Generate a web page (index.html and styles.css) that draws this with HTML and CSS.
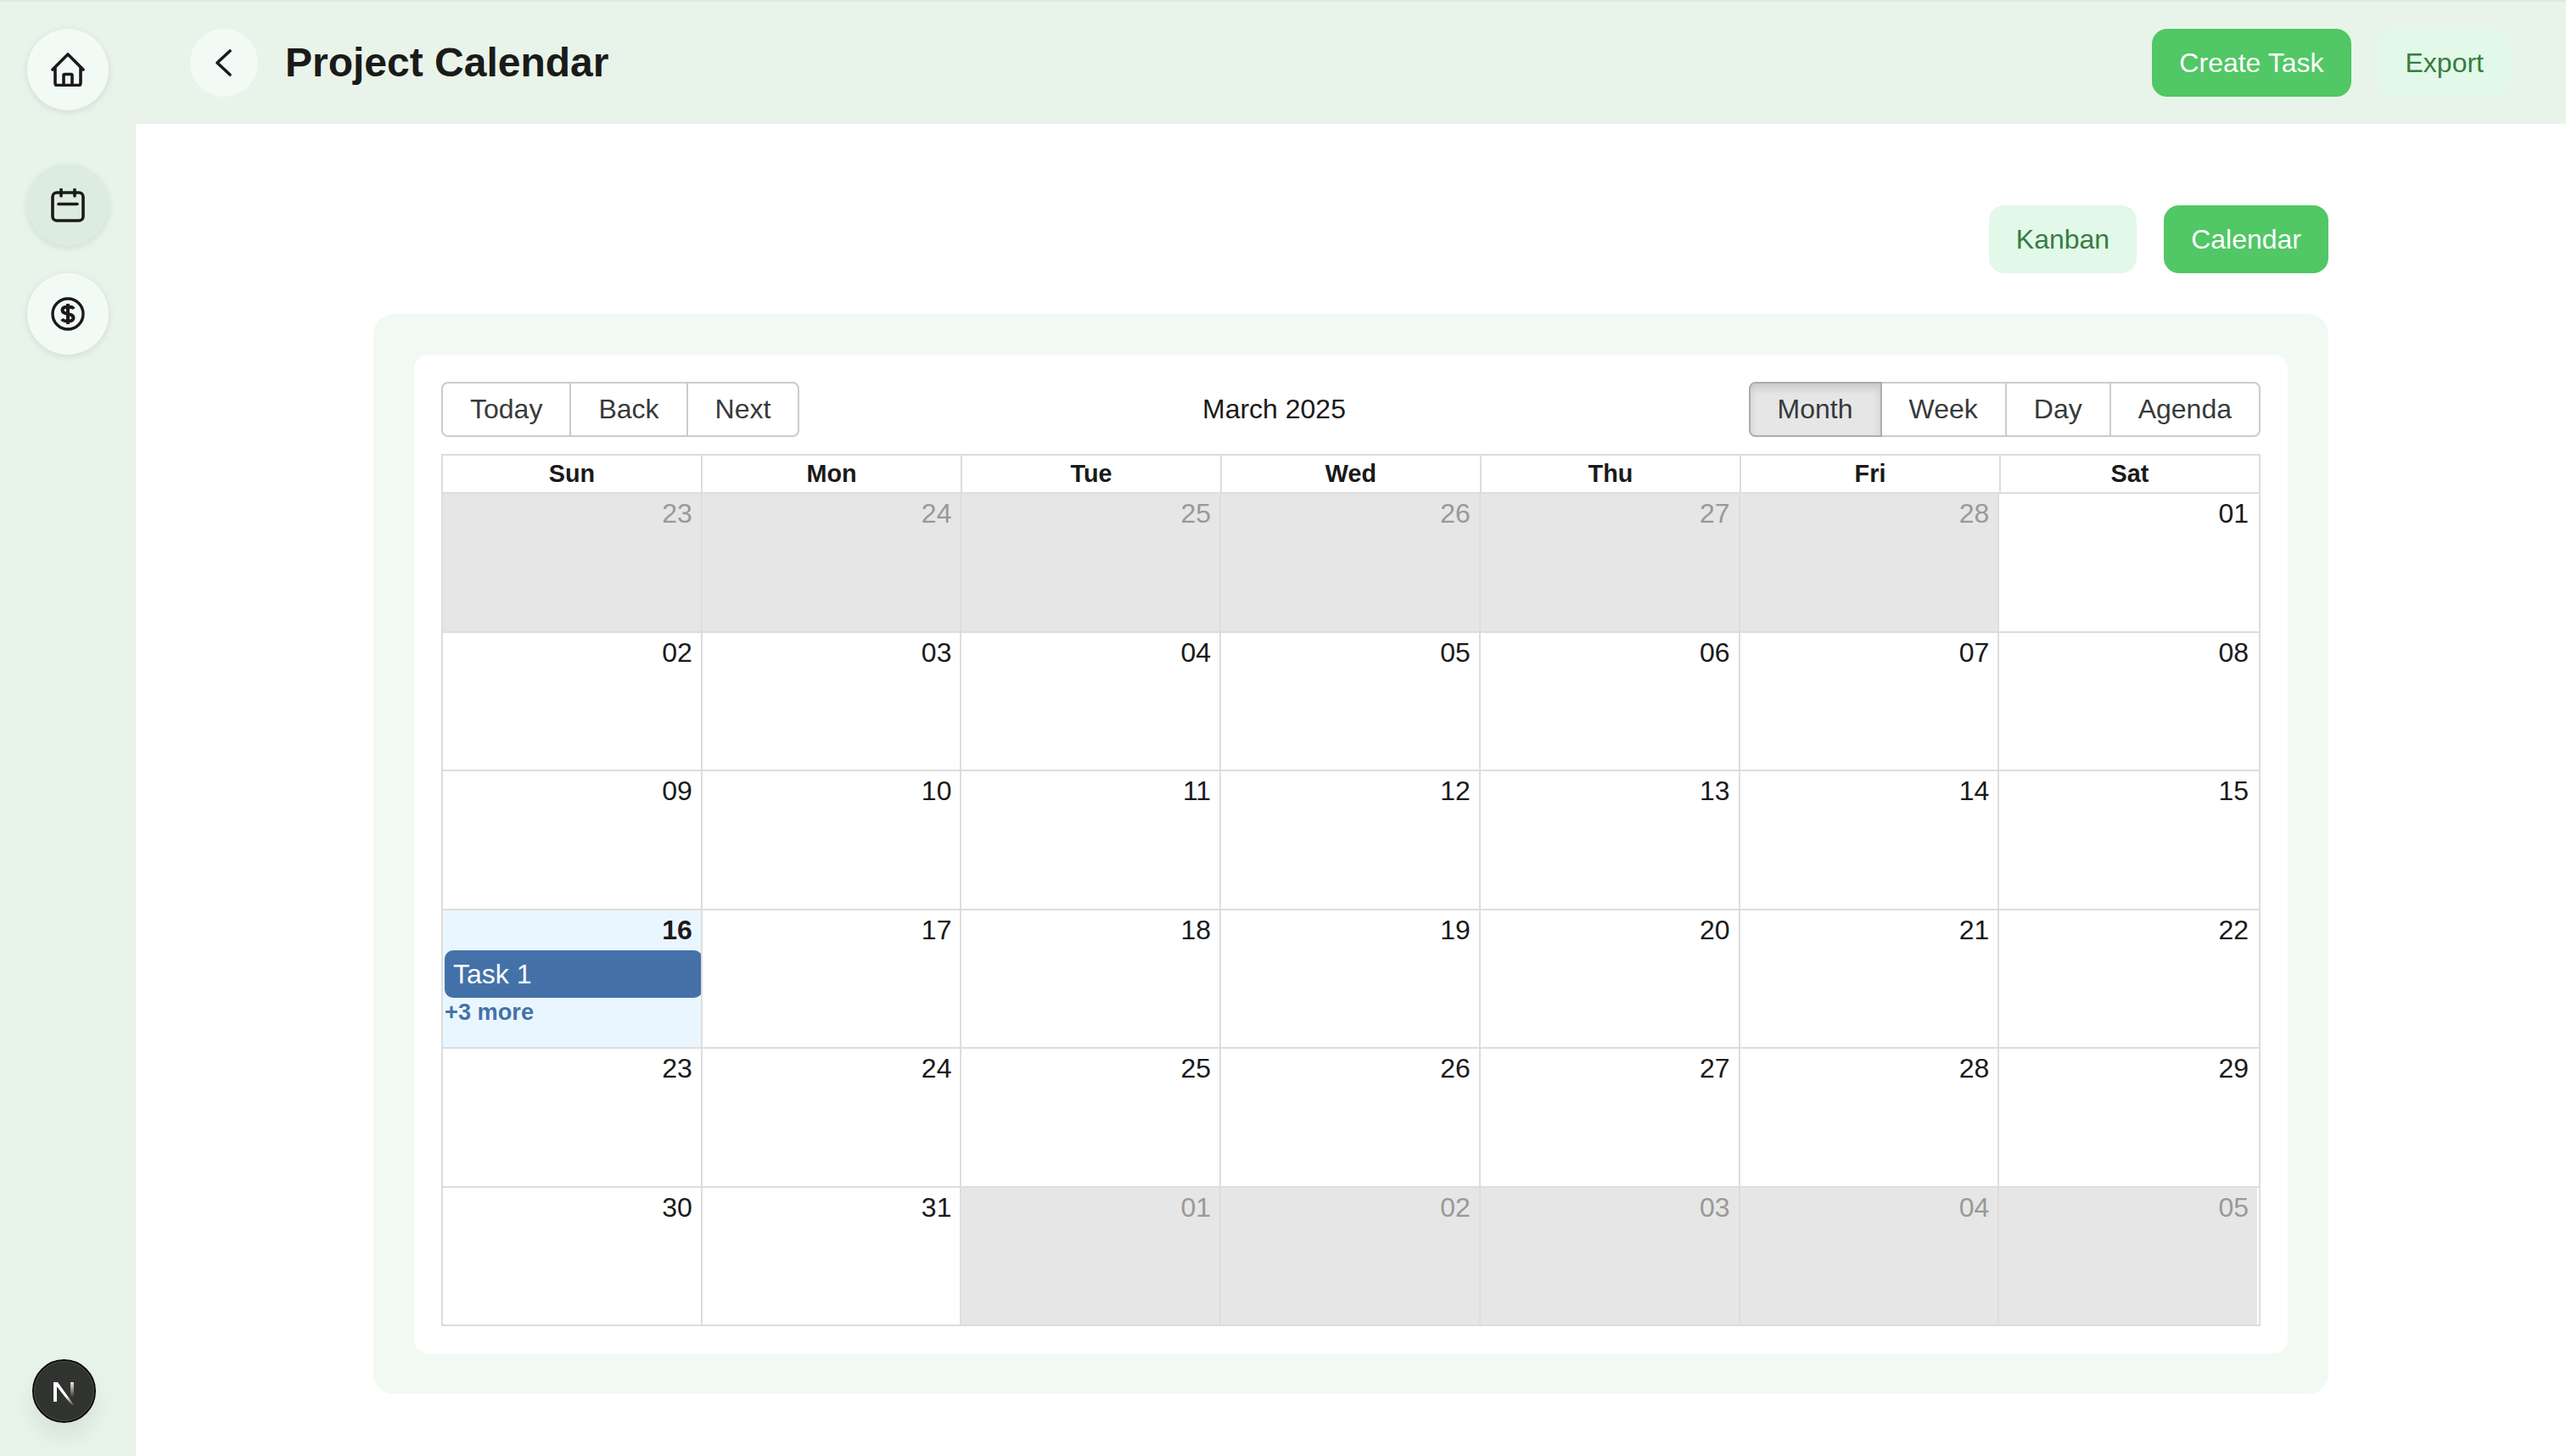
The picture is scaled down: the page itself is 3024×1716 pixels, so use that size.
FILE: index.html
```html
<!DOCTYPE html>
<html lang="en">
<head>
<meta charset="utf-8">
<title>Project Calendar</title>
<link rel="stylesheet" href="styles.css">
</head>
<body>
<div class="app">
  <aside class="sidebar">
    <a class="nav-circle nav-home">
      <svg class="icon" viewBox="0 0 40 40" width="40" height="40"><path d="M2 20 L20 2 L38 20 M5 18 V36 Q5 38.5 7.5 38.5 H32.5 Q35 38.5 35 36 V18 M15 38 V27 Q15 25.5 16.5 25.5 H23.5 Q25 25.5 25 27 V38" fill="none" stroke="#1a1a1a" stroke-width="3.6" stroke-linejoin="round" stroke-linecap="round"/></svg>
    </a>
    <a class="nav-circle nav-active">
      <svg class="icon" viewBox="0 0 40 40" width="40" height="40"><rect x="2" y="5" width="36" height="33" rx="5" fill="none" stroke="#1a1a1a" stroke-width="3.6"/><path d="M12 1.5 V9 M28 1.5 V9 M9 18.5 H31" fill="none" stroke="#1a1a1a" stroke-width="3.6" stroke-linecap="round"/></svg>
    </a>
    <a class="nav-circle">
      <svg class="icon" viewBox="0 0 40 40" width="40" height="40"><circle cx="20" cy="20" r="18" fill="none" stroke="#1a1a1a" stroke-width="3.4"/><path d="M27 14 Q25.5 11.5 20 11.5 Q13.5 11.5 13.5 15.5 Q13.5 19 20 20 Q26.5 21 26.5 24.5 Q26.5 28.5 20 28.5 Q14.5 28.5 13 26 M20 8 V32" fill="none" stroke="#1a1a1a" stroke-width="4"/></svg>
    </a>
  </aside>

  <main class="main">
    <header class="topbar">
      <div class="topbar-left">
        <a class="back-circle">
          <svg viewBox="0 0 20 32" width="20" height="32"><path d="M18 2 L3 16 L18 30" fill="none" stroke="#1a1a1a" stroke-width="3.6" stroke-linecap="round" stroke-linejoin="round"/></svg>
        </a>
        <h1 class="title">Project Calendar</h1>
      </div>
      <div class="btn-row">
        <button class="pill pill-solid">Create Task</button>
        <button class="pill pill-soft">Export</button>
      </div>
    </header>

    <section class="content">
      <div class="btn-row tabs">
        <button class="pill pill-soft">Kanban</button>
        <button class="pill pill-solid">Calendar</button>
      </div>
      <div class="panel">
        <div class="card">
          <div class="toolbar">
            <div class="group">
              <button class="tb">Today</button><button class="tb">Back</button><button class="tb">Next</button>
            </div>
            <div class="label">March 2025</div>
            <div class="group">
              <button class="tb tb-active">Month</button><button class="tb">Week</button><button class="tb">Day</button><button class="tb">Agenda</button>
            </div>
          </div>
          <div class="month">
            <div class="head">
              <div class="hcell">Sun</div><div class="hcell">Mon</div><div class="hcell">Tue</div><div class="hcell">Wed</div><div class="hcell">Thu</div><div class="hcell">Fri</div><div class="hcell">Sat</div>
            </div>
            <div class="week">
              <div class="day off"><div class="date">23</div></div>
              <div class="day off"><div class="date">24</div></div>
              <div class="day off"><div class="date">25</div></div>
              <div class="day off"><div class="date">26</div></div>
              <div class="day off"><div class="date">27</div></div>
              <div class="day off"><div class="date">28</div></div>
              <div class="day"><div class="date">01</div></div>
            </div>
            <div class="week">
              <div class="day"><div class="date">02</div></div>
              <div class="day"><div class="date">03</div></div>
              <div class="day"><div class="date">04</div></div>
              <div class="day"><div class="date">05</div></div>
              <div class="day"><div class="date">06</div></div>
              <div class="day"><div class="date">07</div></div>
              <div class="day"><div class="date">08</div></div>
            </div>
            <div class="week">
              <div class="day"><div class="date">09</div></div>
              <div class="day"><div class="date">10</div></div>
              <div class="day"><div class="date">11</div></div>
              <div class="day"><div class="date">12</div></div>
              <div class="day"><div class="date">13</div></div>
              <div class="day"><div class="date">14</div></div>
              <div class="day"><div class="date">15</div></div>
            </div>
            <div class="week">
              <div class="day today">
                <div class="date">16</div>
                <div class="event">Task 1</div>
                <div class="more">+3 more</div>
              </div>
              <div class="day"><div class="date">17</div></div>
              <div class="day"><div class="date">18</div></div>
              <div class="day"><div class="date">19</div></div>
              <div class="day"><div class="date">20</div></div>
              <div class="day"><div class="date">21</div></div>
              <div class="day"><div class="date">22</div></div>
            </div>
            <div class="week">
              <div class="day"><div class="date">23</div></div>
              <div class="day"><div class="date">24</div></div>
              <div class="day"><div class="date">25</div></div>
              <div class="day"><div class="date">26</div></div>
              <div class="day"><div class="date">27</div></div>
              <div class="day"><div class="date">28</div></div>
              <div class="day"><div class="date">29</div></div>
            </div>
            <div class="week">
              <div class="day"><div class="date">30</div></div>
              <div class="day"><div class="date">31</div></div>
              <div class="day off"><div class="date">01</div></div>
              <div class="day off"><div class="date">02</div></div>
              <div class="day off"><div class="date">03</div></div>
              <div class="day off"><div class="date">04</div></div>
              <div class="day off"><div class="date">05</div></div>
            </div>
          </div>
        </div>
      </div>
    </section>
  </main>
</div>

<div class="dev-badge">
  <svg viewBox="0 0 75 75" width="75" height="75">
    <defs>
      <linearGradient id="fadeDown" x1="0" y1="0" x2="0" y2="1"><stop offset="0" stop-color="#fff"/><stop offset="0.6" stop-color="#fff"/><stop offset="1" stop-color="#fff" stop-opacity="0"/></linearGradient>
      <linearGradient id="fadeBar" x1="0" y1="0" x2="0" y2="1"><stop offset="0" stop-color="#fff" stop-opacity="0.9"/><stop offset="1" stop-color="#fff" stop-opacity="0"/></linearGradient>
    </defs>
    <circle cx="37.5" cy="37.5" r="36.5" fill="#313330" stroke="#0b0b0b" stroke-width="2"/>
    <circle cx="37.5" cy="37.5" r="35" fill="none" stroke="#4c4e4b" stroke-width="1"/>
    <rect x="25" y="27" width="4" height="23" fill="#fff"/>
    <rect x="45" y="27" width="4" height="18" fill="url(#fadeBar)"/>
    <polygon points="25,27 30,27 50,55 47,55" fill="url(#fadeDown)"/>
  </svg>
</div>
</body>
</html>
```
FILE: styles.css
```css
* { box-sizing: border-box; }

html, body {
  margin: 0;
  padding: 0;
  background: #fff;
}

body {
  font-family: "Liberation Sans", Arial, sans-serif;
  color: #1a1a1a;
}

.app {
  display: flex;
  height: 1716px;
  border-top: 2px solid #dfe7e2;
}

.sidebar {
  width: 160px;
  flex: none;
  background: #e8f4e9;
  display: flex;
  flex-direction: column;
  align-items: center;
  padding-top: 32px;
  gap: 32px;
}

.nav-circle {
  width: 96px;
  height: 96px;
  border-radius: 50%;
  background: #f2faf5;
  box-shadow: 0 2px 8px rgba(0, 0, 0, 0.1);
  display: flex;
  align-items: center;
  justify-content: center;
}

.nav-home { margin-bottom: 32px; }

.nav-active { background: #dcecde; }

.main {
  flex: 1;
  min-width: 0;
  display: flex;
  flex-direction: column;
}

.topbar {
  height: 144px;
  flex: none;
  background: #e8f4e9;
  display: flex;
  align-items: center;
  justify-content: space-between;
  padding: 0 65px 0 64px;
}

.topbar-left {
  display: flex;
  align-items: center;
  gap: 32px;
}

.back-circle {
  width: 80px;
  height: 80px;
  border-radius: 50%;
  background: #f2faf5;
  display: flex;
  align-items: center;
  justify-content: center;
  padding-right: 3px;
}

.title {
  margin: 0;
  font-size: 48px;
  font-weight: 700;
  line-height: 1.2;
  color: #1a1a1a;
}

.btn-row {
  display: flex;
  gap: 32px;
}

.pill {
  height: 80px;
  padding: 0 32px;
  border: 0;
  border-radius: 18px;
  font: inherit;
  font-size: 32px;
}

.pill-solid {
  background: #51c765;
  color: #fff;
}

.pill-soft {
  background: #e2f8e8;
  color: #377d43;
}

.content {
  flex: 1;
  padding: 96px 280px 0;
}

.tabs {
  justify-content: flex-end;
  margin-bottom: 48px;
}

.panel {
  background: #f2f9f3;
  border-radius: 24px;
  padding: 48px;
}

.card {
  background: #fff;
  border-radius: 16px;
  padding: 32px;
}

.toolbar {
  display: flex;
  align-items: center;
  margin-bottom: 20px;
  color: #373a3c;
}

.group {
  display: flex;
}

.tb {
  font: inherit;
  font-size: 32px;
  color: #373a3c;
  background: #fff;
  border: 2px solid #ccc;
  padding: 12px 32px;
  margin: 0 0 0 -2px;
  line-height: 37px;
  height: 65px;
}

.tb:first-child {
  margin-left: 0;
  border-radius: 8px 0 0 8px;
}

.tb:last-child { border-radius: 0 8px 8px 0; }

.tb-active {
  background: #e6e6e6;
  border-color: #adadad;
  box-shadow: inset 0 6px 10px rgba(0, 0, 0, 0.125);
  position: relative;
}

.label {
  flex: 1;
  text-align: center;
  font-size: 32px;
  color: #1a1a1a;
}

.month {
  height: 1028px;
  border: 2px solid #ddd;
  display: flex;
  flex-direction: column;
  color: #1a1a1a;
}

.head {
  display: flex;
  flex: none;
  height: 45px;
  border-bottom: 2px solid #ddd;
}

.hcell {
  flex: 1 0 0;
  box-sizing: content-box;
  padding: 0 3px;
  text-align: center;
  font-size: 28.8px;
  font-weight: 700;
  line-height: 43px;
  border-left: 2px solid #ddd;
}

.hcell:first-child { border-left: 0; }

.week {
  flex: 1 1 0;
  min-height: 0;
  display: flex;
  padding-right: 2px;
  border-top: 2px solid #ddd;
}

.week:first-of-type { border-top: 0; }

.head + .week { border-top: 0; }

.day {
  flex: 1 0 0;
  box-sizing: content-box;
  min-width: 0;
  border-left: 2px solid #ddd;
  position: relative;
}

.day:first-child { border-left: 0; }

.off {
  background: #e6e6e6;
  color: #999;
}

.today { background: #eaf6ff; }

.today .date { font-weight: 700; }

.date {
  text-align: right;
  font-size: 32px;
  line-height: 37px;
  padding: 5px 10px 0 0;
}

.event {
  margin: 5px -2px 0 2px;
  padding: 10px 10px 9px;
  border-radius: 10px;
  background: #4472a8;
  color: #fff;
  font-size: 32px;
  line-height: 37px;
  position: relative;
}

.more {
  margin: 1px 0 0 2px;
  font-size: 27.2px;
  line-height: 31px;
  font-weight: 700;
  color: #4472a8;
}

.dev-badge {
  position: absolute;
  left: 38px;
  top: 1602px;
  width: 75px;
  height: 75px;
  border-radius: 50%;
  box-shadow: 0 16px 32px -4px rgba(0, 0, 0, 0.1);
}

.dev-badge svg { display: block; }
```
